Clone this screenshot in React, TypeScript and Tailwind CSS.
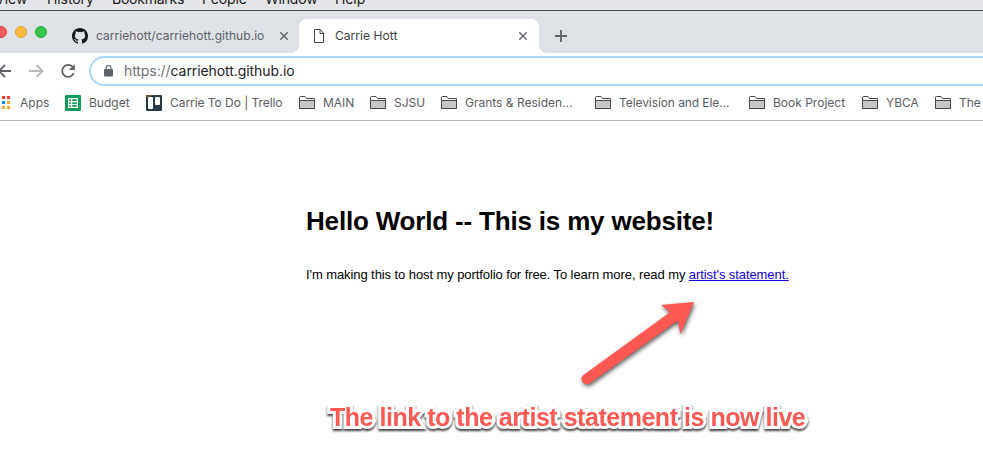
import type { ReactNode } from "react";

function Folder() {
  return (
    <svg className="h-[14px] w-[16px] shrink-0" viewBox="0 0 16 14" fill="none">
      <path d="M.5 12.5V1.5Q.5.5 1.5.5H6L7.5 2.5H15.5V12.5Z" fill="#fff" stroke="#494949" />
      <path d="M1 5H15V12H1Z" fill="#c6c6c6" />
      <path d="M.5 4.5H15.5V12.5H.5Z" stroke="#494949" />
    </svg>
  );
}

function Close() {
  return (
    <svg className="h-2 w-2 shrink-0" viewBox="0 0 8 8" stroke="#5f6368" strokeWidth="1.4">
      <path d="M.3.3 7.7 7.7M7.7.3.3 7.7" />
    </svg>
  );
}

function Bookmark({ width, icon, label }: { width: string; icon: ReactNode; label: ReactNode }) {
  return (
    <div className={`flex h-full shrink-0 items-center gap-2 whitespace-nowrap ${width}`}>
      {icon}
      {label}
    </div>
  );
}

export default function App() {
  return (
    <div className="h-[464px] w-[983px] overflow-hidden bg-white font-['Inter',sans-serif]">
      <nav className="flex h-[11px] items-end overflow-hidden border-b border-[#505157] bg-[#e4e5e9] pb-px text-[14px] leading-[20px] text-[#1d1d20]">
        <span className="-ml-[5px] w-[52px] shrink-0">View</span>
        <span className="w-[65px] shrink-0 tracking-[-0.1px]">History</span>
        <span className="w-[90px] shrink-0 tracking-[-0.25px]">Bookmarks</span>
        <span className="w-[63px] shrink-0 tracking-[-0.15px]">People</span>
        <span className="w-[70px] shrink-0 tracking-[-0.2px]">Window</span>
        <span className="tracking-[-0.1px]">Help</span>
      </nav>

      <div className="flex h-[42px] bg-[#dee1e6]">
        <div className="flex h-[42px] w-[72px] shrink-0 gap-2 pt-[15px]">
          <i className="-ml-[5px] size-3 rounded-full border border-[#e2463f] bg-[#fc5b57]" />
          <i className="size-3 rounded-full border border-[#dfa033] bg-[#fdbc40]" />
          <i className="size-3 rounded-full border border-[#2aab38] bg-[#34c84a]" />
        </div>
        <div className="relative flex w-[227px] shrink-0 items-center pt-2 text-[12px] text-[#5f6368]">
          <svg className="size-4 shrink-0" viewBox="0 0 16 16" fill="#15171a">
            <path d="M8 0C3.58 0 0 3.58 0 8c0 3.54 2.29 6.53 5.47 7.59.4.07.55-.17.55-.38 0-.19-.01-.82-.01-1.49-2.01.37-2.53-.49-2.69-.94-.09-.23-.48-.94-.82-1.13-.28-.15-.68-.52-.01-.53.63-.01 1.08.58 1.23.82.72 1.21 1.87.87 2.33.66.07-.52.28-.87.51-1.07-1.78-.2-3.64-.89-3.64-3.95 0-.87.31-1.59.82-2.15-.08-.2-.36-1.02.08-2.12 0 0 .67-.21 2.2.82a7.65 7.65 0 0 1 4 0c1.53-1.04 2.2-.82 2.2-.82.44 1.1.16 1.92.08 2.12.51.56.82 1.27.82 2.15 0 3.07-1.87 3.75-3.65 3.95.29.25.54.73.54 1.48 0 1.07-.01 1.93-.01 2.2 0 .21.15.46.55.38A8.01 8.01 0 0 0 16 8c0-4.42-3.58-8-8-8Z" />
          </svg>
          <span className="ml-2 w-[184px] tracking-[0.05px]">carriehott/carriehott.github.io</span>
          <Close />
          <svg className="absolute right-0 bottom-0 size-2" viewBox="0 0 8 8" fill="#fff">
            <path d="M8 0V8H0A8 8 0 0 0 8 0Z" />
          </svg>
        </div>
        <div className="mt-2 flex w-[240px] shrink-0 items-center rounded-t-lg bg-white pl-[15px] text-[12px] text-[#3c4043]">
          <svg className="h-[14px] w-[10px] shrink-0" viewBox="0 0 10 14" fill="none" stroke="#424242">
            <path d="M.5.5H6.2L9.5 4V13.5H.5ZM6 .5V4.5H9.5" />
          </svg>
          <span className="ml-[11px] w-[184px] tracking-[0.05px]">Carrie Hott</span>
          <Close />
        </div>
        <svg className="mt-[34px] size-2" viewBox="0 0 8 8" fill="#fff">
          <path d="M0 0V8H8A8 8 0 0 1 0 0Z" />
        </svg>
        <svg className="mt-[19px] ml-2 size-3" viewBox="0 0 12 12" stroke="#5f6368" strokeWidth="1.8">
          <path d="M6 0V12M0 6H12" />
        </svg>
      </div>

      <div className="flex h-[33px] items-start pt-[3px]">
        <svg className="h-[30px] w-[89px] shrink-0" viewBox="0 0 89 30" fill="none" stroke="#5f6368" strokeWidth="1.8">
          <path d="M11 15H-1M5 9 -1 15 5 21" />
          <path d="M29 15H42M36.5 9 42.5 15 36.5 21" stroke="#b6b8ba" />
          <path d="M73 11.2A6 6 0 1 0 73.8 17" />
          <path d="M74.8 8V14H68.8Z" fill="#5f6368" stroke="none" />
        </svg>
        <div className="flex h-[30px] w-[930px] shrink-0 items-center rounded-l-full border-2 border-[#a9d7fd] pl-[13px] text-[14px] text-[#202124]">
          <svg className="-mt-px h-3 w-[9px] shrink-0" viewBox="0 0 9 12" fill="none">
            <rect y="4" width="9" height="7.5" rx="1" fill="#5f6368" />
            <path d="M2 5V3a2.5 2.5 0 0 1 5 0V5" stroke="#5f6368" strokeWidth="1.2" />
          </svg>
          <span className="ml-[11px] pb-[2px] tracking-[-0.08px]">
            <span className="text-[#6b6f73]">https://</span>carriehott.github.io
          </span>
        </div>
      </div>

      <div className="flex h-[35px] items-center overflow-hidden border-b border-[#b6b6b6] pb-px text-[12px] text-[#5a5d61]">
        <Bookmark
          width="w-[65px]"
          icon={
            <svg className="-mr-px h-[13px] w-[13px] shrink-0" viewBox="0 0 13 13">
              <path d="M2 0H5V3H2ZM7 0H10V3H7Z" fill="#f83b35" />
              <path d="M2 5H5V8H2Z" fill="#0b88ed" />
              <path d="M7 5H10V8H7ZM2 10H5V13H2ZM7 10H10V13H7Z" fill="#fba52c" />
            </svg>
          }
          label={<span>Apps</span>}
        />
        <Bookmark
          width="w-[81px]"
          icon={
            <svg className="size-4 shrink-0" viewBox="0 0 16 16">
              <rect width="16" height="16" rx="1" fill="#0f9d58" />
              <path d="M3 3H13V13H3Z" fill="#fff" />
              <path d="M4.2 4.3H6V6H4.2ZM7.2 4.3H11.8V6H7.2ZM4.2 7.2H6V8.9H4.2ZM7.2 7.2H11.8V8.9H7.2ZM4.2 10.1H6V11.8H4.2ZM7.2 10.1H11.8V11.8H7.2Z" fill="#0f9d58" />
            </svg>
          }
          label={<span>Budget</span>}
        />
        <Bookmark
          width="w-[153px]"
          icon={
            <svg className="size-4 shrink-0" viewBox="0 0 16 16">
              <rect width="16" height="16" rx="1" fill="#263b46" />
              <path d="M0 0H8L4 2H0Z" fill="#69543e" />
              <rect x="2" y="2" width="5" height="12" rx="1" fill="#fff" />
              <rect x="9" y="2" width="5" height="8" rx="1" fill="#fff" />
            </svg>
          }
          label={<span className="tracking-[-0.05px]">Carrie To Do | Trello</span>}
        />
        <Bookmark width="w-[71px]" icon={<Folder />} label={<span>MAIN</span>} />
        <Bookmark width="w-[71px]" icon={<Folder />} label={<span>SJSU</span>} />
        <Bookmark width="w-[154px]" icon={<Folder />} label={<span>Grants &amp; Residen...</span>} />
        <Bookmark width="w-[154px]" icon={<Folder />} label={<span className="tracking-[-0.08px]">Television and Ele...</span>} />
        <Bookmark width="w-[113px]" icon={<Folder />} label={<span>Book Project</span>} />
        <Bookmark width="w-[73px]" icon={<Folder />} label={<span>YBCA</span>} />
        <Bookmark width="w-[80px]" icon={<Folder />} label={<span>The</span>} />
      </div>

      <main className="pl-[306px] pt-[84px] font-['Liberation_Sans',Arial,sans-serif] text-black">
        <h1 className="h-[32px] whitespace-nowrap text-[26px] leading-[32px] font-bold tracking-[-0.18px]">Hello World -- This is my website!</h1>
        <p className="mt-[28px] h-[20px] whitespace-nowrap text-[13px] leading-[20px] tracking-[-0.085px]">
          I'm making this to host my portfolio for free. To learn more, read my{" "}
          <a className="text-[#1100dd] underline" href="#statement">artist's statement.</a>
        </p>
        <svg className="mt-[5px] ml-[264px] h-[110px] w-[140px] overflow-visible" viewBox="0 0 140 110">
          <path
            className="drop-shadow-[1px_2px_2px_rgba(0,0,0,0.65)]"
            d="M13.5 85 100 22.3 91 15 124 12 110.5 44 107.5 30.8 20 93.2C14 97 8.5 89 13.5 85Z"
            fill="#fe5853"
          />
        </svg>
        <p className="ml-[24px] pt-px text-[25px] leading-[32px] font-bold tracking-[-0.47px] whitespace-nowrap text-[#fe5853] drop-shadow-[0px_2px_1px_rgba(0,0,0,0.75)] [-webkit-text-stroke:6px_#fff] [paint-order:stroke_fill]">
          The link to the artist statement is now live
        </p>
      </main>
    </div>
  );
}
